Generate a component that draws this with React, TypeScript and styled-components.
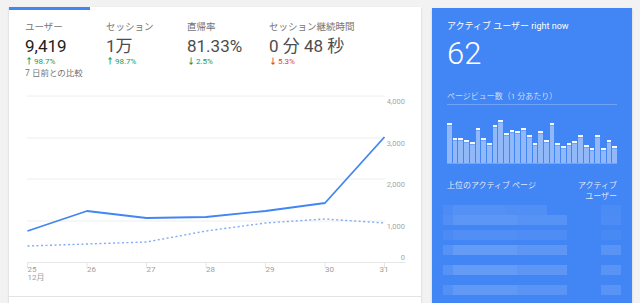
import React from 'react';
import styled, { createGlobalStyle } from 'styled-components';

const GlobalStyle = createGlobalStyle`
  body {
    margin: 0;
    background: #f2f2f2;
    font-family: Roboto, "Noto Sans CJK JP", sans-serif;
  }
`;

const Page = styled.div`
  display: flex;
  gap: 11px;
  padding: 7px 8px 0 9px;
  height: 303px;
  box-sizing: border-box;
  overflow: hidden;
`;

const MainCard = styled.div`
  width: 412px;
  flex: none;
  background: #fff;
  box-shadow: 0 1px 2px rgba(0, 0, 0, 0.18);
  display: flex;
  flex-direction: column;
`;

const Tabs = styled.div`
  display: grid;
  grid-template-columns: 81px 81px 82px 1fr;
  height: 81px;
  flex: none;
`;

const Tab = styled.div<{ $active?: boolean }>`
  box-sizing: border-box;
  border-top: 3px solid ${p => (p.$active ? '#4285f4' : 'transparent')};
  padding: 11px 0 0 16px;
  white-space: nowrap;
`;

const TabLabel = styled.div`
  font-size: 9.5px;
  line-height: 12px;
  color: #757575;
`;

const TabValue = styled.div<{ $active?: boolean }>`
  margin-top: 3px;
  font-size: 17px;
  line-height: 20px;
  color: ${p => (p.$active ? '#212121' : '#4d4d4d')};
`;

const Change = styled.div<{ $bad?: boolean }>`
  margin-top: 1px;
  font-size: 8px;
  line-height: 10px;
  color: ${p => (p.$bad ? '#db4437' : '#0f9d58')};
`;

const Arrow = styled.span`
  font-weight: 700;
  margin-right: 1px;
`;

const Compare = styled.div`
  margin-top: 1px;
  font-size: 8.5px;
  line-height: 10px;
  color: #757575;
`;

const Chart = styled.svg`
  display: block;
  flex: none;
`;

const Footer = styled.div`
  flex: none;
  height: 40px;
  border-top: 1px solid #e3e3e3;
`;

const LiveCard = styled.div`
  width: 200px;
  flex: none;
  margin-top: 1px;
  box-sizing: border-box;
  padding: 10px 15px 0;
  background: #4285f4;
  color: #fff;
  box-shadow: 0 1px 2px rgba(0, 0, 0, 0.18);
`;

const LiveTitle = styled.div`
  font-size: 9px;
  line-height: 16px;
  white-space: nowrap;
`;

const LiveCount = styled.div`
  margin-top: 3px;
  font-size: 31px;
  font-weight: 300;
  line-height: 34px;
`;

const SubTitle = styled.div`
  margin-top: 19px;
  font-size: 8px;
  line-height: 14px;
  color: rgba(255, 255, 255, 0.72);
  border-bottom: 1px solid rgba(255, 255, 255, 0.25);
`;

const Bars = styled.div`
  margin-top: 8px;
  height: 50px;
  display: flex;
  align-items: flex-end;
  gap: 1px;
  border-bottom: 1px solid rgba(255, 255, 255, 0.25);
`;

const Bar = styled.div`
  flex: 1;
  box-sizing: border-box;
  background: rgba(255, 255, 255, 0.42);
  border-top: 2px solid rgba(255, 255, 255, 0.9);
  box-shadow: inset 0 1px 0 rgba(66, 133, 244, 0.45);
`;

const TableHead = styled.div`
  margin-top: 16px;
  display: flex;
  justify-content: space-between;
  font-size: 8px;
  line-height: 11px;
  color: rgba(255, 255, 255, 0.85);
`;

const HeadRight = styled.div`
  text-align: right;
`;

const Rows = styled.div`
  margin-top: 3px;
  display: flex;
  flex-direction: column;
`;

const Row = styled.div<{ $mt: number }>`
  display: flex;
  justify-content: space-between;
  height: 10px;
  margin: ${p => p.$mt}px -4px 0;
`;

const Blur = styled.div<{ $w: number; $a: number }>`
  width: ${p => p.$w}px;
  height: 10px;
  background: linear-gradient(
    90deg,
    rgba(255, 255, 255, ${p => p.$a * 0.6}) 0 10px,
    rgba(255, 255, 255, ${p => p.$a}) 10px 60%,
    rgba(255, 255, 255, ${p => p.$a * 0.8}) 60% 100%
  );
`;

const BlurNum = styled.div<{ $a: number }>`
  width: 20px;
  height: 10px;
  background: rgba(255, 255, 255, ${p => p.$a});
`;

const metrics = [
  { label: 'ユーザー', value: '9,419', arrow: '↑', change: '98.7%', active: true },
  { label: 'セッション', value: '1万', arrow: '↑', change: '98.7%' },
  { label: '直帰率', value: '81.33%', arrow: '↓', change: '2.5%' },
  { label: 'セッション継続時間', value: '0 分 48 秒', arrow: '↓', change: '5.3%', bad: true },
];

const barHeights = [40, 25, 25, 23, 21, 35, 25, 20, 38, 43, 30, 33, 32, 35, 28, 20, 32, 23, 40, 20, 17, 20, 22, 28, 18, 15, 28, 15, 23, 17];

const rows = [
  { mt: 0, w: 104, a: 0.1, n: 0.05 },
  { mt: 0, w: 124, a: 0.14, n: 0.06 },
  { mt: 5, w: 124, a: 0.08, n: 0.04 },
  { mt: 5, w: 124, a: 0.18, n: 0.12 },
  { mt: 10, w: 124, a: 0.18, n: 0.12 },
  { mt: 10, w: 124, a: 0.16, n: 0.12 },
];

// chart geometry (svg origin = card left, top of chart area)
const X0 = 18.5;
const STEP = 59.5;
const solid = [143, 123, 130, 129, 123, 115, 49];
const dotted = [158, 156, 154, 143, 135, 131, 135];
const grid = [
  { y: 8, label: '4,000', ty: 16 },
  { y: 50, label: '3,000', ty: 58 },
  { y: 91, label: '2,000', ty: 99 },
  { y: 133, label: '1,000', ty: 141 },
];
const days = ['25', '26', '27', '28', '29', '30', '31'];

const toPoints = (ys: number[]) => ys.map((y, i) => `${X0 + i * STEP},${y}`).join(' ');

function TrafficChart() {
  return (
    <Chart width={412} height={208} viewBox="0 0 412 208">
      {grid.map(g => (
        <g key={g.label}>
          <line x1={18} x2={376} y1={g.y} y2={g.y} stroke="#eeeeee" strokeWidth={1} />
          <text x={396} y={g.ty} textAnchor="end" fontSize={7.5} fill="#a6a6a6" fontFamily="Roboto, sans-serif">
            {g.label}
          </text>
        </g>
      ))}
      <line x1={18} x2={396} y1={174.5} y2={174.5} stroke="#e6e6e6" strokeWidth={1} />
      <text x={396} y={172} textAnchor="end" fontSize={7.5} fill="#a6a6a6" fontFamily="Roboto, sans-serif">
        0
      </text>
      {days.map((d, i) => (
        <g key={d}>
          <line x1={X0 + i * STEP} x2={X0 + i * STEP} y1={174} y2={180} stroke="#e6e6e6" strokeWidth={1} />
          <text x={X0 + i * STEP + (i === 6 ? -5 : 0)} y={184} fontSize={8} fill="#9e9e9e" fontFamily="Roboto, sans-serif">
            {d}
          </text>
        </g>
      ))}
      <text x={X0} y={192} fontSize={8} fill="#9e9e9e" fontFamily="Roboto, 'Noto Sans CJK JP', sans-serif">
        12月
      </text>
      <polyline points={toPoints(dotted)} fill="none" stroke="#7eaaf6" strokeWidth={1.4} strokeDasharray="2 2.5" />
      <polyline points={toPoints(solid)} fill="none" stroke="#4285f4" strokeWidth={1.8} strokeLinejoin="round" />
    </Chart>
  );
}

export default function App() {
  return (
    <>
      <GlobalStyle />
      <Page>
        <MainCard>
          <Tabs>
            {metrics.map(m => (
              <Tab key={m.label} $active={m.active}>
                <TabLabel>{m.label}</TabLabel>
                <TabValue $active={m.active}>{m.value}</TabValue>
                <Change $bad={m.bad}>
                  <Arrow>{m.arrow}</Arrow>
                  {m.change}
                </Change>
                {m.active && <Compare>7 日前との比較</Compare>}
              </Tab>
            ))}
          </Tabs>
          <TrafficChart />
          <Footer />
        </MainCard>

        <LiveCard>
          <LiveTitle>アクティブ ユーザー right now</LiveTitle>
          <LiveCount>62</LiveCount>
          <SubTitle>ページビュー数（1 分あたり）</SubTitle>
          <Bars>
            {barHeights.map((h, i) => (
              <Bar key={i} style={{ height: h }} />
            ))}
          </Bars>
          <TableHead>
            <div>上位のアクティブ ページ</div>
            <HeadRight>
              アクティブ
              <br />
              ユーザー
            </HeadRight>
          </TableHead>
          <Rows>
            {rows.map((r, i) => (
              <Row key={i} $mt={r.mt}>
                <Blur $w={r.w} $a={r.a} />
                <BlurNum $a={r.n} />
              </Row>
            ))}
          </Rows>
        </LiveCard>
      </Page>
    </>
  );
}
